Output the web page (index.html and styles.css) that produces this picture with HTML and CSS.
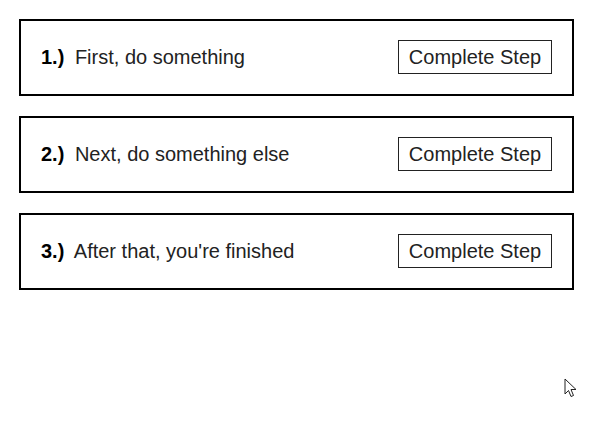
FILE: index.html
```
<!DOCTYPE html>
<html>
<head>
<meta charset="utf-8">
<link rel="stylesheet" href="styles.css">
</head>
<body>
<main class="steps">
  <div class="step">
    <div class="label"><span class="num">1.)</span> First, do something</div>
    <button class="btn">Complete Step</button>
  </div>
  <div class="step">
    <div class="label"><span class="num">2.)</span> Next, do something else</div>
    <button class="btn">Complete Step</button>
  </div>
  <div class="step">
    <div class="label"><span class="num">3.)</span> After that, you're finished</div>
    <button class="btn">Complete Step</button>
  </div>
</main>
<svg class="cursor" width="14" height="22" viewBox="0 0 14 22">
  <path d="M1 1 L1 16 L4.5 12.5 L7 18.5 L9.5 17.5 L7 11.5 L12 11.5 Z" fill="#fff" stroke="#222" stroke-width="1" stroke-linejoin="miter"/>
</svg>
</body>
</html>
```
FILE: styles.css
```
html, body {
  margin: 0;
  padding: 0;
  background: #fff;
}
body {
  font-family: "Liberation Sans", Arial, sans-serif;
  color: #222;
}
.steps {
  display: flex;
  flex-direction: column;
  gap: 20px;
  padding: 19px 18px 0 19px;
}
.step {
  box-sizing: border-box;
  height: 77px;
  border: 2px solid #000;
  display: flex;
  align-items: center;
  justify-content: space-between;
  padding: 0 20px 0 20px;
}
.label {
  font-size: 20px;
  color: #222;
}
.num {
  font-weight: bold;
  color: #000;
  margin-right: 5px;
}
.btn {
  box-sizing: border-box;
  width: 154px;
  height: 34px;
  margin-top: -1px;
  font-family: "Liberation Sans", Arial, sans-serif;
  font-size: 20px;
  color: #222;
  background: #fff;
  border: 1px solid #222;
  padding: 0;
  border-radius: 0;
}
.cursor {
  position: absolute;
  left: 564px;
  top: 378px;
}
```
